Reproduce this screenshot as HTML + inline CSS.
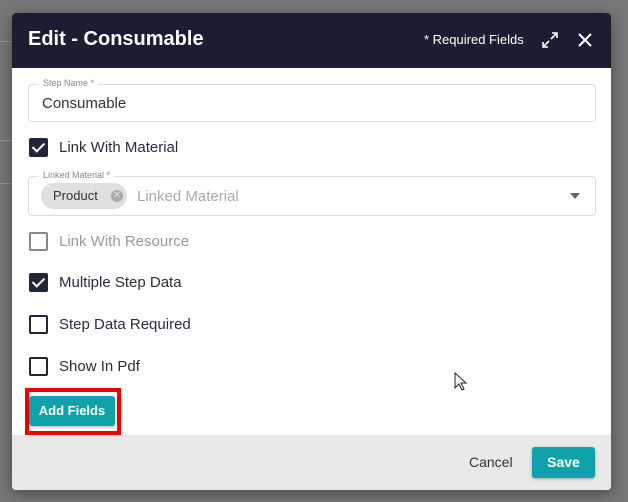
<!DOCTYPE html><html><head><style>
body{margin:0;width:628px;height:502px;background:#787878;position:relative;overflow:hidden;font-family:"Liberation Sans",sans-serif}
.l{position:absolute;left:0;width:12px;height:1px;background:#999}
.m{position:absolute;left:12px;top:13px;width:599px;height:477px;background:#fff;border-radius:4px;overflow:hidden;box-shadow:0 4px 16px rgba(0,0,0,.4)}
.h{height:55px;background:#1c1d33;color:#fff;position:relative}
.h b{position:absolute;left:16px;top:15px;font-size:20px}
.rq{position:absolute;left:412px;top:19px;font-size:13px}
.a{position:absolute}
.f{position:absolute;left:16px;width:566px;border:1px solid #ddd;border-radius:4px}
.lg{position:absolute;left:10px;top:-7px;background:#fff;padding:0 4px;font-size:9px;color:#888}
.cb{position:absolute;left:17px;width:15px;height:15px;border:2px solid #222538;border-radius:2px}
.cb.on{background:#222538}
.cb.on:after{content:"";position:absolute;left:4px;top:0px;width:5px;height:10px;border:solid #fff;border-width:0 2px 2px 0;transform:rotate(45deg)}
.t{position:absolute;left:47px;font-size:15px;color:#2a2d3c}
.btn{position:absolute;background:#10a2ab;color:#fff;font-weight:bold;border-radius:3px;font-size:13px;text-align:center;box-shadow:0 1px 3px rgba(0,0,0,.3)}
</style></head><body>
<div class="l" style="top:41px"></div><div class="l" style="top:140px"></div><div class="l" style="top:183px"></div>
<div class="m">
<div class="h"><b>Edit - Consumable</b><span class="rq">* Required Fields</span>
<svg class="a" style="left:529px;top:18px" width="18" height="18" viewBox="0 0 18 18" fill="none" stroke="#fff" stroke-width="1.6"><path d="M10 8L16 2M11 2h5v5M8 10L2 16M2 11v5h5"/></svg>
<svg class="a" style="left:565px;top:19px" width="16" height="16" viewBox="0 0 16 16" stroke="#fff" stroke-width="2"><path d="M2 2L14 14M14 2L2 14"/></svg>
</div>
<div class="f" style="top:71px;height:36px"><span class="lg">Step Name *</span><span class="a" style="left:13px;top:10px;font-size:15px;color:#333">Consumable</span></div>
<div class="cb on" style="top:125px"></div><span class="t" style="top:126px">Link With Material</span>
<div class="f" style="top:163px;height:38px"><span class="lg">Linked Material *</span>
<span class="a" style="left:12px;top:6px;width:86px;height:26px;background:#e0e0e0;border-radius:13px;font-size:13px;color:#333;line-height:26px;text-indent:12px">Product<span class="a" style="left:70px;top:7px;width:12px;height:12px;border-radius:6px;background:#aaa;color:#e0e0e0;font-size:10px;line-height:12px;text-indent:0;text-align:center">✕</span></span>
<span class="a" style="left:108px;top:11px;font-size:15px;color:#aaa">Linked Material</span>
<span class="a" style="left:541px;top:16px;border:5px solid transparent;border-top:6px solid #666"></span></div>
<div class="cb" style="top:219px;border-color:#888"></div><span class="t" style="top:220px;color:#999">Link With Resource</span>
<div class="cb on" style="top:260px"></div><span class="t" style="top:261px">Multiple Step Data</span>
<div class="cb" style="top:302px"></div><span class="t" style="top:303px">Step Data Required</span>
<div class="cb" style="top:344px"></div><span class="t" style="top:345px">Show In Pdf</span>
<div class="a" style="left:13px;top:375px;width:88px;height:39px;border:4px solid #e00"></div>
<div class="btn" style="left:17px;top:383px;width:86px;height:30px;line-height:30px">Add Fields</div>
<div class="a" style="left:0;top:422px;width:599px;height:55px;background:#e9e9e9"></div>
<span class="a" style="left:457px;top:441px;font-size:14px;color:#333">Cancel</span>
<div class="btn" style="left:520px;top:434px;width:63px;height:31px;line-height:31px;font-size:14px">Save</div>
</div>
<svg class="a" style="left:454px;top:372px" width="14" height="20" viewBox="0 0 14 20"><path d="M1 1v15l4-4 3 6 2-1-3-6h5z" fill="#fff" stroke="#222" stroke-width="1"/></svg>
</body></html>
